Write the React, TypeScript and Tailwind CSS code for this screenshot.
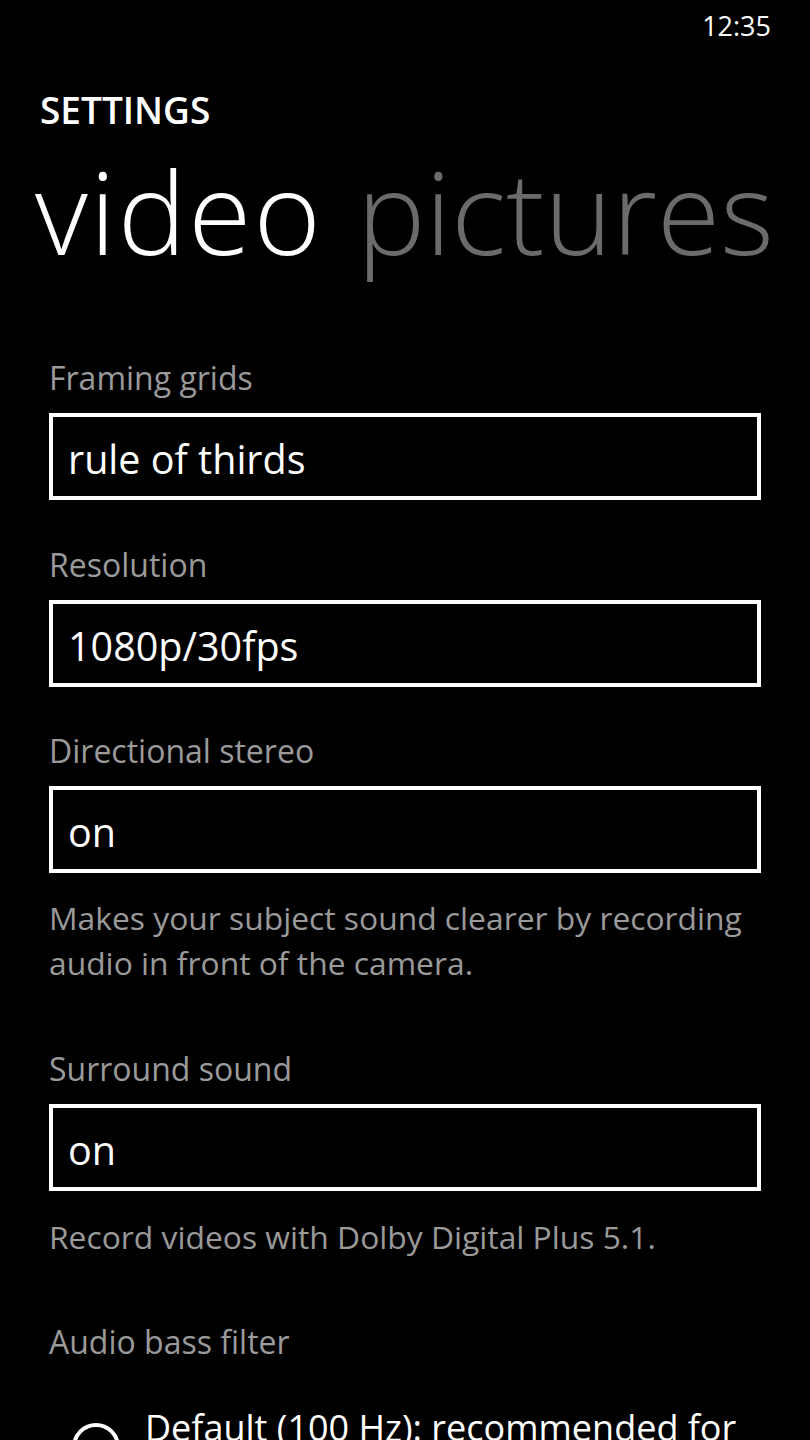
const font = "font-['Open_Sans','Noto_Sans',sans-serif]";

function Label({ children, className = '' }: { children: React.ReactNode; className?: string }) {
  return <div className={`text-[32px] leading-[40px] text-[#9a9a9a] ${className}`}>{children}</div>;
}

function Picker({ value }: { value: string }) {
  return (
    <div className="mt-[15px] h-[87px] border-4 border-white flex items-center px-[15px] pt-[4px]">
      <span className="text-[39.5px] leading-[48px] text-white">{value}</span>
    </div>
  );
}

function Hint({ children, className = '' }: { children: React.ReactNode; className?: string }) {
  return <p className={`text-[31.8px] leading-[45px] text-[#9a9a9a] ${className}`}>{children}</p>;
}

export default function App() {
  return (
    <div className={`w-[810px] h-[1440px] overflow-hidden bg-black text-white ${font}`}>
      {/* status bar */}
      <div className="h-[52px] flex items-center justify-end pr-[39px] text-[27px]">12:35</div>

      {/* title */}
      <div className="mt-[38px] pl-[40px] text-[37px] leading-[40px] font-semibold">SETTINGS</div>

      {/* pivot headers */}
      <div className="mt-[23px] pl-[35px] flex gap-[34px] text-[115px] leading-none font-light whitespace-nowrap">
        <span className="tracking-[2px]">video</span>
        <span className="text-[#6b6b6b]">pictures</span>
      </div>

      <div className="px-[49px]">
        <Label className="mt-[90px]">Framing grids</Label>
        <Picker value="rule of thirds" />

        <Label className="mt-[45px]">Resolution</Label>
        <Picker value="1080p/30fps" />

        <Label className="mt-[44px]">Directional stereo</Label>
        <Picker value="on" />
        <Hint className="mt-[22px]">
          Makes your subject sound clearer by recording audio in front of the camera.
        </Hint>

        <Label className="mt-[64px]">Surround sound</Label>
        <Picker value="on" />
        <Hint className="mt-[23px]">Record videos with Dolby Digital Plus 5.1.</Hint>

        <Label className="mt-[63px]">Audio bass filter</Label>

        <div className="mt-[42px] flex items-start gap-[25px] pl-[23px]">
          <div className="mt-[19px] w-[48px] h-[48px] shrink-0 rounded-full border-4 border-white" />
          <div className="text-[36px] leading-[48px] text-white">
            Default (100 Hz): recommended for most situations
          </div>
        </div>
      </div>
    </div>
  );
}
